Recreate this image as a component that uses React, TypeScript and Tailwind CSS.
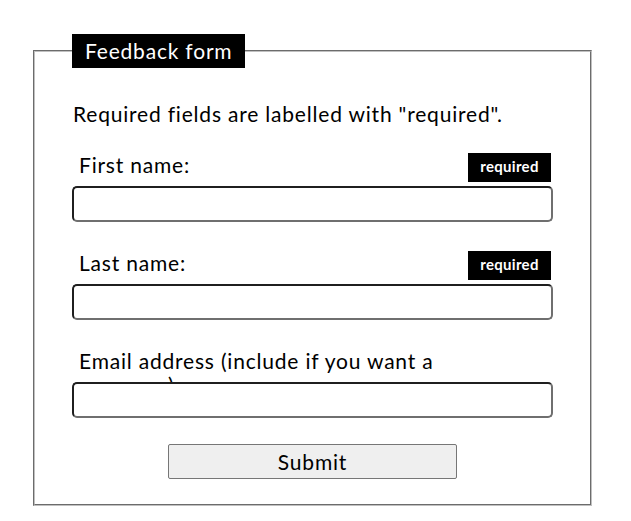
import React from 'react';

const fieldRows = [
  { id: 'first', label: 'First name:', required: true, type: 'text' },
  { id: 'last', label: 'Last name:', required: true, type: 'text' },
  { id: 'email', label: 'Email address (include if you want a response)', required: false, type: 'email' },
];

const App = () => {
  return (
    <div className="pt-[34px] pl-[33px] w-[592px] text-black tracking-[0.8px] [font-family:Lato,'Liberation_Sans',sans-serif]">
      <fieldset className="border-2 [border-style:groove] border-[#c0c0c0] px-[37px] pb-[25px]">
        <legend className="bg-black text-white px-[13px] h-[34px] leading-[34px] text-[21px]">
          Feedback form
        </legend>

        <p className="mt-[32px] text-[21px] leading-[28px] pl-[1px]">
          Required fields are labelled with "required".
        </p>

        <div className="mt-[25px]">
          {fieldRows.map((row) => (
            <div key={row.id} className="mb-[29px]">
              <div className="flex justify-between h-[29px] mb-[4px]">
                <label htmlFor={row.id} className="block w-[380px] pl-[7px] text-[21px] leading-[24px]">
                  {row.label}
                </label>
                {row.required && (
                  <span className="w-[83px] h-[29px] mr-[2px] bg-black text-white text-[15px] tracking-[0.3px] font-bold leading-[27px] text-center">
                    required
                  </span>
                )}
              </div>
              <input
                id={row.id}
                type={row.type}
                className="relative block w-full h-[36px] rounded-[5px] border-2 border-t-[#1f1f1f] border-l-[#1f1f1f] border-b-[#6f6f6f] border-r-[#6f6f6f] bg-white"
              />
            </div>
          ))}
        </div>

        <button
          type="button"
          className="block w-[289px] h-[35px] mx-auto -mt-[3px] bg-[#efefef] border border-[#767676] rounded-[2px] text-[21px] leading-[33px]"
        >
          Submit
        </button>
      </fieldset>
    </div>
  );
};

export default App;
